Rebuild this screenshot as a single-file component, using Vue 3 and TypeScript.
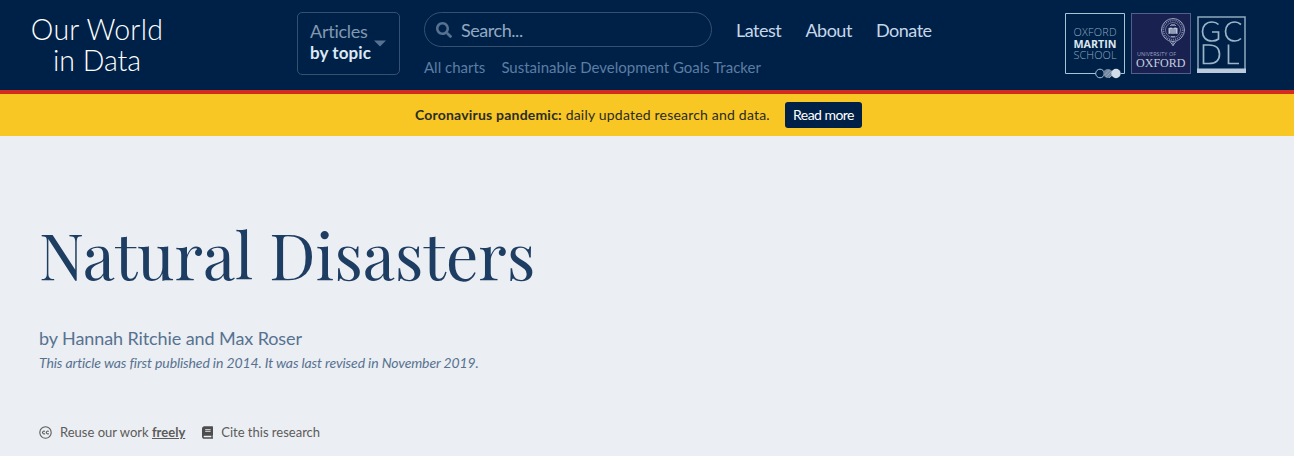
<script setup lang="ts">
const navLinks: string[] = ['Latest', 'About', 'Donate']
const subLinks: string[] = ['All charts', 'Sustainable Development Goals Tracker']
</script>

<template>
  <div class="page">
    <header class="site-header">
      <a class="logo"><span>Our World</span><span>in Data</span></a>
      <button class="topics" type="button">
        <span class="topics-label"><span>Articles</span><strong>by topic</strong></span>
        <svg class="caret" width="12" height="7" viewBox="0 0 12 7"><path d="M0 0.5h12L6 6.5z" fill="#577291" /></svg>
      </button>
      <div class="middle">
        <div class="search">
          <svg width="16" height="16" viewBox="0 0 512 512"><path fill="#577291" d="M505 442.700 405.300 343c-4.500-4.500-10.600-7-17-7H372c27.600-35.300 44-79.700 44-128C416 93.100 322.900 0 208 0S0 93.100 0 208s93.100 208 208 208c48.300 0 92.700-16.400 128-44v16.300c0 6.400 2.500 12.500 7 17l99.700 99.700c9.400 9.400 24.600 9.400 33.900 0l28.300-28.300c9.400-9.400 9.400-24.600.1-34zM208 336c-70.700 0-128-57.200-128-128 0-70.700 57.200-128 128-128 70.700 0 128 57.200 128 128 0 70.700-57.200 128-128 128z" /></svg>
          <span>Search...</span>
        </div>
        <nav class="sub-links"><a v-for="l in subLinks" :key="l">{{ l }}</a></nav>
      </div>
      <nav class="nav-links"><a v-for="l in navLinks" :key="l">{{ l }}</a></nav>
      <div class="partners">
        <svg width="60" height="66" viewBox="0 0 60 66">
          <path d="M31 60.500H.5V.5h59v60H56" fill="none" stroke="#a9c3d6" />
          <g font-family="Open Sans" font-size="10.800">
            <text x="8.500" y="23" textLength="43" fill="#8fa9c2" font-weight="300">OXFORD</text>
            <text x="8.500" y="34.500" textLength="43" fill="#dce7ef" font-weight="700" lengthAdjust="spacingAndGlyphs">MARTIN</text>
            <text x="8.500" y="46" textLength="43" fill="#8fa9c2" font-weight="300">SCHOOL</text>
          </g>
          <circle cx="35" cy="60.500" r="4.300" fill="#002147" stroke="#a9c3d6" />
          <circle cx="43" cy="60.500" r="4.500" fill="#71869e" />
          <path d="M39.500 62l5-5M41 64l6-6M44 65l3-3" stroke="#a9b8c8" stroke-width=".7" />
          <circle cx="51" cy="60.500" r="4.700" fill="#d2dde7" />
        </svg>
        <svg width="60" height="61" viewBox="0 0 60 61">
          <rect x=".5" y=".5" width="59" height="60" fill="#182150" stroke="#535f8b" />
          <g fill="none" stroke="#98a5c0">
            <circle cx="42" cy="17" r="11.500" stroke-width="1" />
            <circle cx="42" cy="17" r="9.700" stroke-width="1.800" stroke-dasharray="1 1" stroke="#7987a8" />
            <circle cx="42" cy="17" r="7.500" stroke-width=".6" />
            <path d="M39 28.500l3 4 3-4M42 28v5" />
          </g>
          <path d="M37.500 15q2.500-1 4.500 0 2-1 4.500 0v6q-2.500-1-4.500 0-2-1-4.500 0z" fill="#b8c4d6" />
          <path d="M42 15v6M39 17h2M43 17h2M39 19h2M43 19h2" stroke="#182150" stroke-width=".5" />
          <path d="M39 12l1 1 1-2 1 2 1-2 1 2 1-1M40 23.500h4" stroke="#a5b2c9" stroke-width=".8" fill="none" />
          <text x="6" y="43" font-family="Open Sans" font-size="5.400" textLength="39" fill="#98a5c0">UNIVERSITY OF</text>
          <text x="5" y="54" font-family="Liberation Serif" font-size="12" textLength="49.500" lengthAdjust="spacingAndGlyphs" fill="#c5cfdd">OXFORD</text>
        </svg>
        <svg class="gcdl" width="49" height="58" viewBox="0 0 49 58">
          <rect x="1" y="1" width="47" height="54" fill="none" stroke="#8fa9bd" stroke-width="1.500" />
          <rect y="52.500" width="49" height="4.500" fill="#b9cbdc" />
          <g fill="none" stroke="#9bb4c9" stroke-width="1.700">
            <path d="M21.500 8.500Q19 6 15 6C9 6 5.500 10 5.500 15.500S9 25 15 25q4 0 6.500-2v-7H15M44 8.500Q41 6 38 6C32 6 28.500 10 28.500 15.500S32 25 38 25q3.500 0 6-2.500M6.500 29v18.500H12c7 0 10.500-3.500 10.500-9.300S19 29 12 29zM31.500 28.500v19H42" />
          </g>
        </svg>
      </div>
    </header>
    <div class="alert">
      <p><strong>Coronavirus pandemic:</strong> daily updated research and data.</p>
      <a class="read-more">Read more</a>
    </div>
    <main class="article">
      <h1>Natural Disasters</h1>
      <div class="authors">by Hannah Ritchie and Max Roser</div>
      <div class="published">This article was first published in 2014. It was last revised in November 2019.</div>
      <div class="tools">
        <svg width="13" height="13" viewBox="0 0 13 13" fill="none" stroke="#5b5b5b"><circle cx="6.500" cy="6.500" r="5.700" stroke-width="1.100" /><path d="M5.900 5.500a1.400 1.400 0 1 0 0 2M9.700 5.500a1.400 1.400 0 1 0 0 2" stroke-width="1.100" /></svg>
        <span class="reuse">Reuse our work <a>freely</a></span>
        <svg width="11" height="13" viewBox="0 0 448 512"><path fill="#4d4d4d" d="M448 360V24c0-13.300-10.700-24-24-24H96C43 0 0 43 0 96v320c0 53 43 96 96 96h328c13.300 0 24-10.700 24-24v-16c0-7.500-3.500-14.300-8.900-18.700-4.200-15.400-4.200-59.300 0-74.700 5.400-4.300 8.900-11.100 8.900-18.600zM128 134c0-3.300 2.700-6 6-6h212c3.300 0 6 2.700 6 6v20c0 3.300-2.700 6-6 6H134c-3.300 0-6-2.700-6-6v-20zm0 64c0-3.300 2.700-6 6-6h212c3.300 0 6 2.700 6 6v20c0 3.300-2.700 6-6 6H134c-3.300 0-6-2.700-6-6v-20zm253.400 250H96c-17.700 0-32-14.300-32-32 0-17.600 14.400-32 32-32h285.400c-1.900 17.100-1.900 46.900 0 64z" /></svg>
        <span class="cite">Cite this research</span>
      </div>
    </main>
  </div>
</template>

<style>
body { margin: 0; background: #fff; overflow: hidden; }
</style>

<style scoped>
* { box-sizing: border-box; }
.page { width: 1294px; height: 456px; background: #ebeef2; font-family: Lato, "Liberation Sans", sans-serif; overflow: hidden; white-space: nowrap; }
.site-header { height: 94px; background: #002147; border-bottom: 4px solid #d42b21; display: flex; align-items: flex-start; padding: 12px 48px 0 31px; }
.logo { width: 132px; display: flex; flex-direction: column; align-items: center; color: #fff; font-weight: 300; font-size: 28.5px; line-height: 31px; padding-top: 2px; }
.logo span:first-child { letter-spacing: 0.25px; }
.topics { width: 103px; height: 63px; margin-left: 134px; border: 1px solid #36506f; border-radius: 5px; background: transparent; padding: 0 13px 0 12px; display: flex; align-items: center; justify-content: space-between; font-family: inherit; }
.topics-label { display: flex; flex-direction: column; text-align: left; font-size: 18px; line-height: 22px; color: #8298b1; width: 62px; flex: none; padding-bottom: 3px; letter-spacing: -0.25px; }
.topics-label strong { color: #dce9f5; font-size: 17px; letter-spacing: 0.1px; }
.caret { flex: none; margin-left: 2px; }
.middle { margin-left: 24px; width: 288px; flex: none; }
.search { height: 35px; border: 1px solid #36506f; border-radius: 18px; display: flex; align-items: center; padding-left: 11px; gap: 9px; color: #93a9c2; font-size: 18px; letter-spacing: -0.45px; }
.sub-links { margin-top: 10px; display: flex; gap: 16px; font-size: 15px; line-height: 20px; color: #5c7da4; }
.sub-links a { flex: none; }
.nav-links { margin-left: 24px; display: flex; gap: 24.2px; font-size: 18px; line-height: 36px; letter-spacing: -0.5px; color: #c7d7ea; }
.partners { margin-left: auto; padding-top: 1px; display: flex; align-items: flex-start; gap: 6px; }
.gcdl { margin-top: 3px; }
.alert { height: 42px; background: #f9c723; display: flex; align-items: center; padding-left: 415px; color: #2a2c24; font-size: 14px; }
.alert p { margin: 0; padding-bottom: 2px; width: 370px; flex: none; letter-spacing: 0.2px; }
.read-more { width: 77px; height: 26px; border-radius: 3px; background: #002147; color: #fff; text-align: center; line-height: 26px; font-size: 14px; letter-spacing: -0.55px; }
.article { padding: 78px 0 0 39px; }
h1 { margin: 0; font-family: "Playfair Display", "Liberation Serif", serif; font-weight: 400; font-size: 64px; line-height: 80px; color: #1d3d63; }
.authors { margin-top: 33px; font-size: 18px; line-height: 22px; letter-spacing: -0.09px; color: #577291; }
.published { margin-top: 4px; font-size: 14px; line-height: 20px; letter-spacing: -0.12px; font-style: italic; color: #577291; }
.tools { margin-top: 49px; display: flex; align-items: center; font-size: 13px; line-height: 20px; color: #5b5b5b; }
.reuse { margin: 0 17px 0 8px; }
.reuse a { font-weight: 700; text-decoration: underline; }
.cite { margin-left: 8px; }
</style>
